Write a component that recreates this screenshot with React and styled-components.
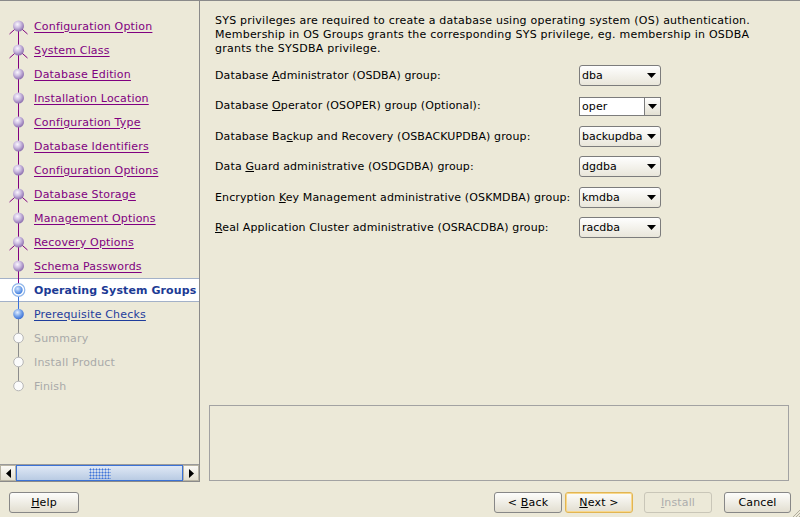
import React from 'react';
import styled, { createGlobalStyle } from 'styled-components';

const GlobalStyle = createGlobalStyle`
  html, body {
    margin: 0;
    padding: 0;
    background: #ece9d8;
  }
  body {
    font-family: "DejaVu Sans", Verdana, sans-serif;
    font-size: 11px;
    letter-spacing: 0.12px;
    color: #000;
  }
`

const Window = styled.div`
  position: relative;
  width: 800px;
  height: 517px;
  display: flex;
  flex-direction: column;
  background: #ece9d8;
  overflow: hidden;
`

const Main = styled.div`
  display: flex;
  height: 481px;
  border-top: 1px solid #8a8a8a;
`

const Sidebar = styled.div`
  width: 199px;
  display: flex;
  flex-direction: column;
  border-right: 1px solid #8a8a8a;
  border-bottom: 1px solid #8a8a8a;
`

const StepList = styled.div`
  flex: 1;
  padding-top: 13px;
`

const StepRow = styled.div`
  display: flex;
  align-items: center;
  height: 24px;
  box-sizing: border-box;
  background: ${p => (p.$current ? '#fff' : 'transparent')};
  border-top: 1px solid ${p => (p.$current ? '#a3b1c8' : 'transparent')};
  border-bottom: 1px solid ${p => (p.$current ? '#a3b1c8' : 'transparent')};
`

const StepIcon = styled.svg`
  flex: none;
  width: 34px;
  height: 24px;
  margin: -1px 0;
`

const StepLabel = styled.span`
  white-space: nowrap;
  letter-spacing: ${p => (p.$state === 'current' ? '0.1px' : '0.18px')};
  color: ${p => ({ done: '#800080', current: '#1c3a94', next: '#1f3d9c', future: '#a9a9a9' }[p.$state])};
  font-weight: ${p => (p.$state === 'current' ? 'bold' : 'normal')};
  text-decoration: ${p => (p.$state === 'done' || p.$state === 'next' ? 'underline' : 'none')};
  text-underline-offset: 2px;
`

const HScroll = styled.div`
  height: 17px;
  display: flex;
  box-sizing: border-box;
  border-top: 1px solid #9a9a9a;
`

const ScrollArrow = styled.div`
  width: 16px;
  flex: none;
  display: flex;
  align-items: center;
  justify-content: center;
  box-sizing: border-box;
  border: 1px solid #b8b4a4;
  background: linear-gradient(#fbfaf6, #e3dfd0);
`

const Thumb = styled.div`
  flex: 1;
  display: flex;
  align-items: center;
  justify-content: center;
  box-sizing: border-box;
  border: 1px solid #3b72d6;
  background: linear-gradient(#dfe8f5, #b9cbe3);
`

const Grip = styled.div`
  width: 22px;
  height: 11px;
  background-image: radial-gradient(circle, #3f74d8 0.9px, transparent 1.1px);
  background-size: 3px 3px;
`

const Content = styled.div`
  flex: 1;
  display: flex;
  flex-direction: column;
  padding: 0 11px 1px 9px;
`

const FormArea = styled.div`
  flex: 1;
  padding: 13px 0 0 6px;
`

const Intro = styled.p`
  margin: 0 0 9px;
  line-height: 14px;
  letter-spacing: 0.23px;
`

const GroupGrid = styled.div`
  display: grid;
  grid-template-columns: 364px 82px;
  grid-auto-rows: 21px;
  row-gap: 9.4px;
  align-items: center;
`

const Label = styled.span`
  white-space: nowrap;
`

const Combo = styled.div`
  height: 21px;
  box-sizing: border-box;
  display: flex;
  align-items: center;
  justify-content: space-between;
  padding: 0 4px 0 2px;
  letter-spacing: 0;
  border: 1px solid #7c7c7c;
  border-radius: 3px;
  background: linear-gradient(#fefefe, #e9e6da);
`

const EditCombo = styled.div`
  height: 19px;
  margin-top: 1px;
  box-sizing: border-box;
  display: flex;
  border: 1px solid #7c7c7c;
  background: #fff;
`

const EditText = styled.div`
  flex: 1;
  display: flex;
  align-items: center;
  padding-left: 2px;
`

const EditButton = styled.div`
  width: 15px;
  display: flex;
  align-items: center;
  justify-content: center;
  border-left: 1px solid #7c7c7c;
  background: linear-gradient(#fefefe, #e3e0d2);
`

const MessageBox = styled.div`
  height: 76px;
  box-sizing: border-box;
  border: 1px solid #a2a2a2;
`

const Footer = styled.div`
  flex: 1;
  display: flex;
  align-items: flex-start;
  padding: 10px 9px 0 9px;
`

const Spacer = styled.div`
  flex: 1;
`

const Button = styled.button`
  width: ${p => p.$w || 68}px;
  height: 21px;
  margin-left: ${p => p.$gap || 0}px;
  padding: 0;
  font-family: inherit;
  font-size: 11px;
  letter-spacing: 0.15px;
  color: ${p => (p.disabled ? '#adadad' : '#000')};
  border-radius: 3px;
  border: 1px solid ${p => (p.disabled ? '#c9c6b8' : p.$default ? '#e2b552' : '#878787')};
  box-shadow: ${p => (p.$default ? 'inset 0 0 0 1px #f8d88c' : 'none')};
  background: ${p => (p.disabled ? '#ece9d8' : 'linear-gradient(#fdfdfb, #e2ded0)')};
`

const Grabber = styled.svg`
  position: absolute;
  right: 0;
  bottom: 0;
`

const Arrow = ({ dir = 'down' }) => {
  if (dir === 'left') return <svg width="5" height="9"><path d="M5 0 L0 4.5 L5 9 Z" fill="#000" /></svg>;
  if (dir === 'right') return <svg width="5" height="9"><path d="M0 0 L5 4.5 L0 9 Z" fill="#000" /></svg>;
  return <svg width="9" height="5"><path d="M0 0 H9 L4.5 5 Z" fill="#000" /></svg>;
};

const lineColor = { purple: '#800080', blue: '#3a6fd8', gray: '#8c8c8c' };

const Dot = ({ kind, id }) => {
  if (kind === 'done') {
    return (
      <>
        <defs>
          <radialGradient id={id} cx="40%" cy="35%" r="65%">
            <stop offset="0" stopColor="#faf7fd" />
            <stop offset="0.5" stopColor="#cbbbe0" />
            <stop offset="1" stopColor="#8e70b0" />
          </radialGradient>
        </defs>
        <circle cx="18.5" cy="12" r="5.5" fill={`url(#${id})`} />
      </>
    );
  }
  if (kind === 'current') {
    return (
      <>
        <defs>
          <radialGradient id={id} cx="40%" cy="35%" r="65%">
            <stop offset="0" stopColor="#d8e8ff" />
            <stop offset="1" stopColor="#3f7ee0" />
          </radialGradient>
        </defs>
        <circle cx="18.5" cy="12" r="6.3" fill="#fff" stroke="#8fb5ea" strokeWidth="1.2" />
        <circle cx="18.5" cy="12" r="4.2" fill={`url(#${id})`} />
      </>
    );
  }
  if (kind === 'next') {
    return (
      <>
        <defs>
          <radialGradient id={id} cx="40%" cy="35%" r="65%">
            <stop offset="0" stopColor="#e4efff" />
            <stop offset="0.55" stopColor="#7aa6ea" />
            <stop offset="1" stopColor="#3c70d4" />
          </radialGradient>
        </defs>
        <circle cx="18.5" cy="12" r="5.3" fill={`url(#${id})`} />
      </>
    );
  }
  return <circle cx="18.5" cy="12" r="4.8" fill="#fbfbfb" stroke="#b5b5b5" strokeWidth="1" />;
};

const steps = [
  { label: 'Configuration Option', state: 'done', top: null, bottom: 'purple', branch: true },
  { label: 'System Class', state: 'done', top: 'purple', bottom: 'purple', branch: true },
  { label: 'Database Edition', state: 'done', top: 'purple', bottom: 'purple' },
  { label: 'Installation Location', state: 'done', top: 'purple', bottom: 'purple' },
  { label: 'Configuration Type', state: 'done', top: 'purple', bottom: 'purple' },
  { label: 'Database Identifiers', state: 'done', top: 'purple', bottom: 'purple' },
  { label: 'Configuration Options', state: 'done', top: 'purple', bottom: 'purple' },
  { label: 'Database Storage', state: 'done', top: 'purple', bottom: 'purple', branch: true },
  { label: 'Management Options', state: 'done', top: 'purple', bottom: 'purple' },
  { label: 'Recovery Options', state: 'done', top: 'purple', bottom: 'purple', branch: true },
  { label: 'Schema Passwords', state: 'done', top: 'purple', bottom: 'purple' },
  { label: 'Operating System Groups', state: 'current', top: 'purple', bottom: 'blue' },
  { label: 'Prerequisite Checks', state: 'next', top: 'blue', bottom: 'gray' },
  { label: 'Summary', state: 'future', top: 'gray', bottom: 'gray' },
  { label: 'Install Product', state: 'future', top: 'gray', bottom: 'gray' },
  { label: 'Finish', state: 'future', top: 'gray', bottom: null },
];

const groups = [
  { pre: 'Database ', key: 'A', post: 'dministrator (OSDBA) group:', value: 'dba' },
  { pre: 'Database ', key: 'O', post: 'perator (OSOPER) group (Optional):', value: 'oper', editable: true },
  { pre: 'Database Ba', key: 'c', post: 'kup and Recovery (OSBACKUPDBA) group:', value: 'backupdba' },
  { pre: 'Data ', key: 'G', post: 'uard administrative (OSDGDBA) group:', value: 'dgdba' },
  { pre: 'Encryption ', key: 'K', post: 'ey Management administrative (OSKMDBA) group:', value: 'kmdba' },
  { pre: '', key: 'R', post: 'eal Application Cluster administrative (OSRACDBA) group:', value: 'racdba' },
];

const Step = ({ step, index }) => {
  const current = step.state === 'current';
  return (
    <StepRow $current={current}>
      <StepIcon viewBox="0 0 34 24">
        {step.top && <line x1="18.5" y1="0" x2="18.5" y2="12" stroke={lineColor[step.top]} strokeWidth="1" />}
        {step.bottom && <line x1="18.5" y1="12" x2="18.5" y2="24" stroke={lineColor[step.bottom]} strokeWidth="1" />}
        {step.branch && (
          <path d="M18.5 12 L9.5 20 M18.5 12 L27.5 20" stroke="#800080" strokeWidth="1" fill="none" />
        )}
        <Dot kind={step.state} id={`dot${index}`} />
      </StepIcon>
      <StepLabel $state={step.state}>{step.label}</StepLabel>
    </StepRow>
  );
};

const App = () => (
  <Window>
    <GlobalStyle />
    <Main>
      <Sidebar>
        <StepList>
          {steps.map((s, i) => <Step step={s} index={i} key={s.label} />)}
        </StepList>
        <HScroll>
          <ScrollArrow><Arrow dir="left" /></ScrollArrow>
          <Thumb><Grip /></Thumb>
          <ScrollArrow><Arrow dir="right" /></ScrollArrow>
        </HScroll>
      </Sidebar>
      <Content>
        <FormArea>
          <Intro>
            SYS privileges are required to create a database using operating system (OS) authentication.<br />
            Membership in OS Groups grants the corresponding SYS privilege, eg. membership in OSDBA<br />
            grants the SYSDBA privilege.
          </Intro>
          <GroupGrid>
            {groups.map(g => (
              <React.Fragment key={g.value}>
                <Label>{g.pre}<u>{g.key}</u>{g.post}</Label>
                {g.editable ? (
                  <EditCombo>
                    <EditText>{g.value}</EditText>
                    <EditButton><Arrow /></EditButton>
                  </EditCombo>
                ) : (
                  <Combo>
                    <span>{g.value}</span>
                    <Arrow />
                  </Combo>
                )}
              </React.Fragment>
            ))}
          </GroupGrid>
        </FormArea>
        <MessageBox />
      </Content>
    </Main>
    <Footer>
      <Button $w={70}><u>H</u>elp</Button>
      <Spacer />
      <Button>&lt; <u>B</u>ack</Button>
      <Button $gap={3} $default><u>N</u>ext &gt;</Button>
      <Button $gap={11} disabled><u>I</u>nstall</Button>
      <Button $gap={12} $w={67}>Cancel</Button>
    </Footer>
    <Grabber width="8" height="8" viewBox="0 0 8 8">
      <path d="M8 1 L1 8 M8 4 L4 8 M8 7 L7 8" stroke="#b0ac9c" strokeWidth="1" />
    </Grabber>
  </Window>
);

export default App;
